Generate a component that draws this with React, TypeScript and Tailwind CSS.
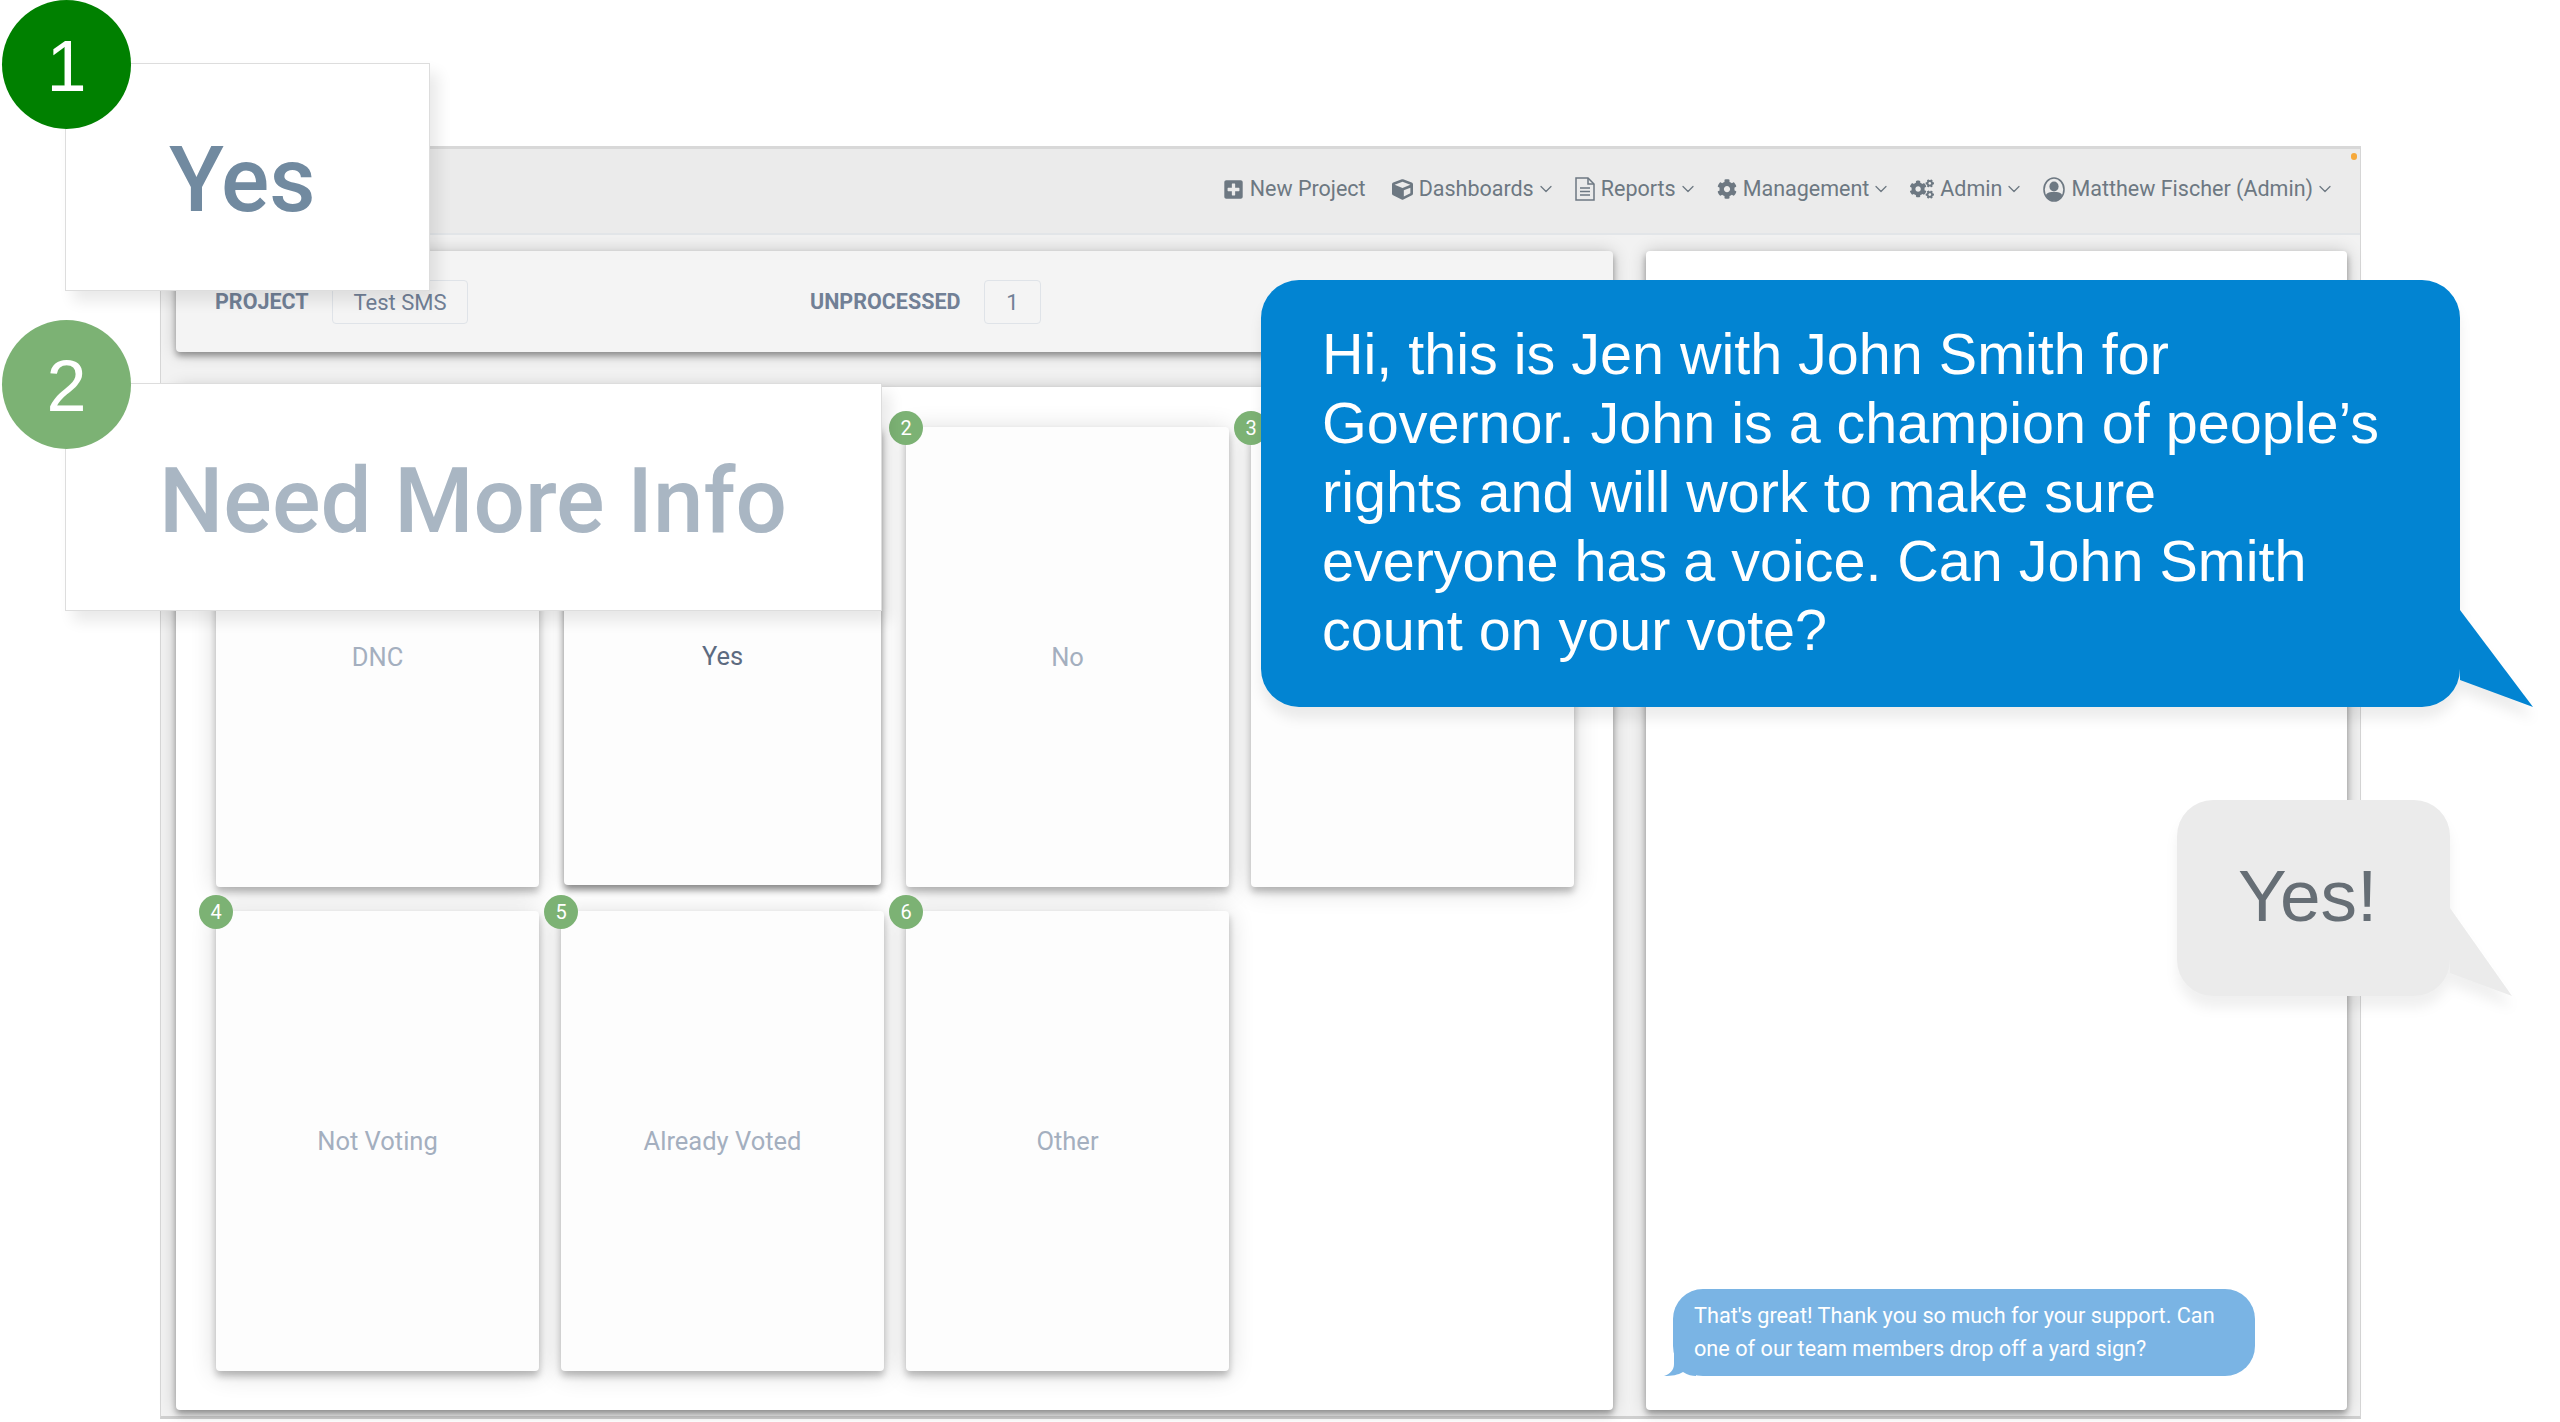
import { FaCog, FaCogs, FaCube, FaPlusSquare } from "react-icons/fa";
import { FiChevronDown } from "react-icons/fi";

const roboto = "font-['Roboto',sans-serif]";
const helvetica = "font-['Liberation_Sans',Arial,sans-serif]";

function FileIcon() {
  return (
    <svg width="20" height="24" viewBox="0 0 20 24" fill="none" stroke="currentColor" strokeWidth="1.5">
      <path d="M1 1H13L19 7V23H1Z" />
      <path d="M13 1V7H19" />
      <path d="M5 11H15M5 14.5H15M5 18H15" />
    </svg>
  );
}

function UserIcon() {
  return (
    <svg width="22" height="25" viewBox="0 0 22 25">
      <ellipse cx="11" cy="12.5" rx="10" ry="11.5" fill="none" stroke="currentColor" strokeWidth="1.6" />
      <ellipse cx="11" cy="9.5" rx="4.6" ry="5" fill="currentColor" />
      <path d="M2.8 18C4 15.5 7 15 11 15C15 15 18 15.5 19.2 18C17.5 21.8 14.5 23.6 11 23.6C7.5 23.6 4.5 21.8 2.8 18Z" fill="currentColor" />
    </svg>
  );
}

const navItems = [
  { icon: <FaCube className="h-[21px] w-[21px]" />, label: "Dashboards" },
  { icon: <FileIcon />, label: "Reports" },
  { icon: <FaCog className="h-[20px] w-[20px]" />, label: "Management" },
  { icon: <FaCogs className="h-[24px] w-[24px]" />, label: "Admin" },
  { icon: <UserIcon />, label: "Matthew Fischer (Admin)" },
];

const cards = [
  { label: "DNC" },
  { label: "Yes", badge: 2, active: true },
  { label: "No", badge: 2 },
  { label: "", badge: 3 },
  { label: "Not Voting", badge: 4 },
  { label: "Already Voted", badge: 5 },
  { label: "Other", badge: 6 },
];

function Badge({ n, className }: { n: number; className: string }) {
  return (
    <span
      className={`absolute z-10 flex h-[34px] w-[34px] items-center justify-center rounded-full bg-[#7cb274] text-[20px] text-white ${className}`}
    >
      {n}
    </span>
  );
}

function Card({ label, badge, active }: { label: string; badge?: number; active?: boolean }) {
  return (
    <div
      className={`relative flex items-center justify-center rounded-[4px] bg-[#fdfdfd] text-[25.5px] ${
        active
          ? "mx-[3px] mb-[2px] text-[#5d6b80] shadow-[0_5px_7px_rgba(0,0,0,0.42),0_0_14px_rgba(0,0,0,0.14)]"
          : "text-[#a4afbf] shadow-[0_5px_7px_rgba(0,0,0,0.24),0_3px_26px_rgba(0,0,0,0.16)]"
      }`}
    >
      {label}
      {badge && !active && <Badge n={badge} className="left-[-17px] top-[-16px]" />}
    </div>
  );
}

function Callout({ n, text, dark, className }: { n: number; text: string; dark?: boolean; className: string }) {
  return (
    <div
      className={`absolute left-[65px] z-20 flex h-[228px] items-center border border-[#dddddd] bg-white pt-[8px] shadow-[8px_10px_14px_rgba(0,0,0,0.09)] ${className}`}
    >
      <span
        className={`absolute left-[-64px] top-[-64px] flex h-[129px] w-[129px] items-center justify-center rounded-full pt-[2px] text-[72px] text-white ${helvetica} ${
          dark ? "bg-[#008000]" : "bg-[#7cb274]"
        }`}
      >
        {n}
      </span>
      <span
        className={`font-medium leading-none ${dark ? "pl-[103px] text-[90px] text-[#718aa0]" : "pl-[93px] text-[90.7px] text-[#a9b6c3]"}`}
      >
        {text}
      </span>
    </div>
  );
}

const panelShadow = "shadow-[0_4px_6px_rgba(0,0,0,0.34),0_1px_18px_rgba(0,0,0,0.2)]";

export default function App() {
  return (
    <div className={`relative h-[1422px] w-full overflow-hidden bg-white pl-[160px] pt-[146px] ${roboto}`}>
      <div className="relative flex h-[1273px] w-[2201px] flex-col border-x border-b-[3px] border-t-[3px] border-x-[#d6d6d6] border-b-[#cfcfcf] border-t-[#d8d8d8] bg-[#f2f2f2]">
        <span className="absolute right-[3px] top-[4px] h-[7px] w-[6px] rounded-full bg-[#f6a93b]" />

        <header className="flex h-[86px] shrink-0 items-center justify-end gap-[19px] border-b-2 border-[#e2e5e8] bg-[#ebebeb] pb-[4px] pr-[25px] text-[21.5px] text-[#6d7882]">
          <div className="mr-[7px] flex items-center gap-[6px]">
            <FaPlusSquare className="h-[21px] w-[21px]" />
            <span>New Project</span>
          </div>
          {navItems.map((item) => (
            <div key={item.label} className="flex items-center gap-[6px]">
              {item.icon}
              <span>{item.label}</span>
              <FiChevronDown className="ml-[-4px] h-[20px] w-[20px]" strokeWidth={1.5} />
            </div>
          ))}
        </header>

        <main className="flex flex-1 gap-[33px] pb-[6px] pl-[15px] pr-[13px] pt-[16px]">
          <div className="flex w-[1437px] flex-col gap-[35px]">
            <section className={`flex h-[101px] shrink-0 items-center rounded-[4px] bg-[#f4f4f4] pl-[39px] pt-[1px] text-[21.5px] text-[#718096] ${panelShadow}`}>
              <span className="w-[117px] font-bold">PROJECT</span>
              <span className="flex h-[44px] w-[136px] items-center justify-center rounded-[4px] border border-[#dfe3e8] text-[22px]">
                Test SMS
              </span>
              <span className="ml-[342px] w-[174px] font-bold">UNPROCESSED</span>
              <span className="flex h-[44px] w-[57px] items-center justify-center rounded-[4px] border border-[#dfe3e8] text-[22px]">
                1
              </span>
            </section>

            <section className={`grid flex-1 grid-cols-[323px_323px_323px_323px] grid-rows-[460px_460px] gap-x-[22px] gap-y-[24px] rounded-[4px] bg-white pl-[40px] pt-[40px] ${panelShadow}`}>
              {cards.map((card, i) => (
                <Card key={i} label={card.label} badge={card.badge} active={card.active} />
              ))}
            </section>
          </div>

          <section className={`flex flex-1 flex-col justify-end rounded-[4px] bg-white pb-[34px] pl-[27px] ${panelShadow}`}>
            <div className="relative h-[87px] w-[582px] rounded-[30px] bg-[#7ab4e4] px-[21px] pt-[10px] text-[21.7px] leading-[33px] text-white">
              <svg className="absolute bottom-0 left-[-9px]" width="32" height="26" viewBox="0 0 32 26">
                <path d="M10 0V14C10 20 6 24 0 26C8 26 14 25 19 22C24 25 28 26 32 26V0Z" fill="#7ab4e4" />
              </svg>
              <p className="relative">
                That's great! Thank you so much for your support. Can
                <br />
                one of our team members drop off a yard sign?
              </p>
            </div>
          </section>
        </main>
      </div>

      <Callout n={1} text="Yes" dark className="top-[63px] w-[365px]" />
      <Callout n={2} text="Need More Info" className="top-[383px] w-[817px]" />

      <div className={`absolute left-[1261px] top-[280px] z-20 drop-shadow-[0_12px_6px_rgba(0,0,0,0.07)] ${helvetica}`}>
        <div className="h-[427px] w-[1199px] rounded-[38px] bg-[#0284d2] pl-[61px] pt-[40px] text-[57.5px] leading-[69px] text-white">
          Hi, this is Jen with John Smith for
          <br />
          Governor. John is a champion of people’s
          <br />
          rights and will work to make sure
          <br />
          everyone has a voice. Can John Smith
          <br />
          count on your vote?
        </div>
        <svg className="absolute left-[1197px] top-[330px]" width="76" height="98" viewBox="0 0 76 98">
          <path d="M2 0L75 97L2 70Z" fill="#0284d2" />
        </svg>
      </div>

      <div className={`absolute left-[2177px] top-[800px] z-20 drop-shadow-[0_12px_6px_rgba(0,0,0,0.06)] ${helvetica}`}>
        <div className="flex h-[196px] w-[273px] items-start rounded-[36px] bg-[#ebebeb] pl-[61px] pt-[57px] text-[73px] leading-[78px] text-[#666e75]">
          Yes!
        </div>
        <svg className="absolute left-[271px] top-[108px]" width="64" height="90" viewBox="0 0 64 90">
          <path d="M2 0L64 88L2 65Z" fill="#ebebeb" />
        </svg>
      </div>
    </div>
  );
}
